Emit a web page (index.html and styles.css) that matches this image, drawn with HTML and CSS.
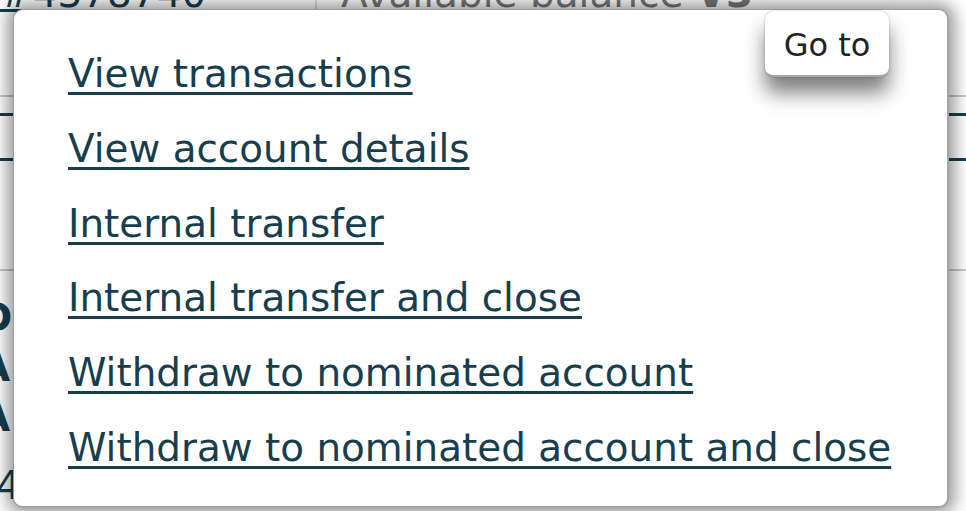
FILE: index.html
```html
<!DOCTYPE html>
<html lang="en">
<head>
  <meta charset="UTF-8">
  <meta name="viewport" content="width=device-width, initial-scale=1.0">
  <title>Account actions</title>
  <link rel="stylesheet" href="styles.css">
</head>
<body>

  <div class="page">
    <div class="summary">
      <a href="#" class="acct-no">#4378740</a>
      <div class="balance">Available balance <b>V3</b></div>
    </div>
    <div class="rule grey"></div>
    <div class="rule teal first"></div>
    <div class="rule teal second"></div>
    <div class="rule grey last"></div>
    <div class="labels">
      <div>D</div>
      <div>A</div>
      <div>A</div>
    </div>
    <div class="footer-no">4437840</div>
  </div>

  <div class="menu">
    <button class="goto">Go to</button>
    <ul class="actions">
      <li><a href="#">View transactions</a></li>
      <li><a href="#">View account details</a></li>
      <li><a href="#">Internal transfer</a></li>
      <li><a href="#">Internal transfer and close</a></li>
      <li><a href="#">Withdraw to nominated account</a></li>
      <li><a href="#">Withdraw to nominated account and close</a></li>
    </ul>
  </div>

</body>
</html>
```

FILE: styles.css
```css
body {
  font-family: 'DejaVu Sans', Verdana, sans-serif;
  background-color: #fff;
  color: #173e4e;
  margin: 0;
  padding: 0;
  overflow: hidden;
  height: 511px;
}

.page {
  font-size: 39px;
}

.summary {
  display: flex;
  margin-top: -29px;
  height: 46px;
  align-items: flex-end;
}

.acct-no {
  color: #173e4e;
  width: 315px;
  border-right: 2px solid #ddd;
  line-height: 46px;
}

.balance {
  color: #777;
  padding-left: 24px;
  line-height: 46px;
}

.rule {
  height: 0;
  border-top: 2px solid #c8c8c8;
}

.rule.grey {
  margin-top: 78px;
}

.rule.teal {
  border-top: 3px solid #173e4e;
}

.rule.first {
  margin-top: 16px;
}

.rule.second {
  margin-top: 42px;
}

.rule.last {
  margin-top: 108px;
}

.labels {
  font-weight: bold;
  margin-top: 22px;
  line-height: 50px;
  margin-left: -20px;
}

.footer-no {
  margin-top: 20px;
  margin-left: -4px;
}

.menu {
  position: absolute;
  left: 13px;
  top: 9px;
  width: 933px;
  height: 496px;
  background: #fff;
  border: 1px solid #9c9c9c;
  border-right: 2px solid #a5a5a5;
  border-bottom: 2px solid #a5a5a5;
  border-radius: 10px;
  box-shadow: 0 0 16px 6px rgba(0,0,0,0.4);
}

.goto {
  position: absolute;
  top: 1px;
  right: 58px;
  width: 124px;
  height: 66px;
  font-family: 'DejaVu Sans', sans-serif;
  font-size: 32px;
  color: #222;
  background: #fff;
  border: none;
  border-bottom: 2px solid #a8a8a8;
  border-radius: 9px;
  box-shadow: 0 0 2px rgba(0,0,0,0.3), 0 16px 20px rgba(0,0,0,0.5);
  padding: 4px 0 0;
}

.actions {
  list-style: none;
  margin: 0;
  padding: 27px 0 0 54px;
  font-size: 38.9px;
  line-height: 74.8px;
}

.actions a {
  color: #173e4e;
  text-decoration: underline;
  text-decoration-thickness: 3px;
  text-underline-offset: 5px;
}
```
